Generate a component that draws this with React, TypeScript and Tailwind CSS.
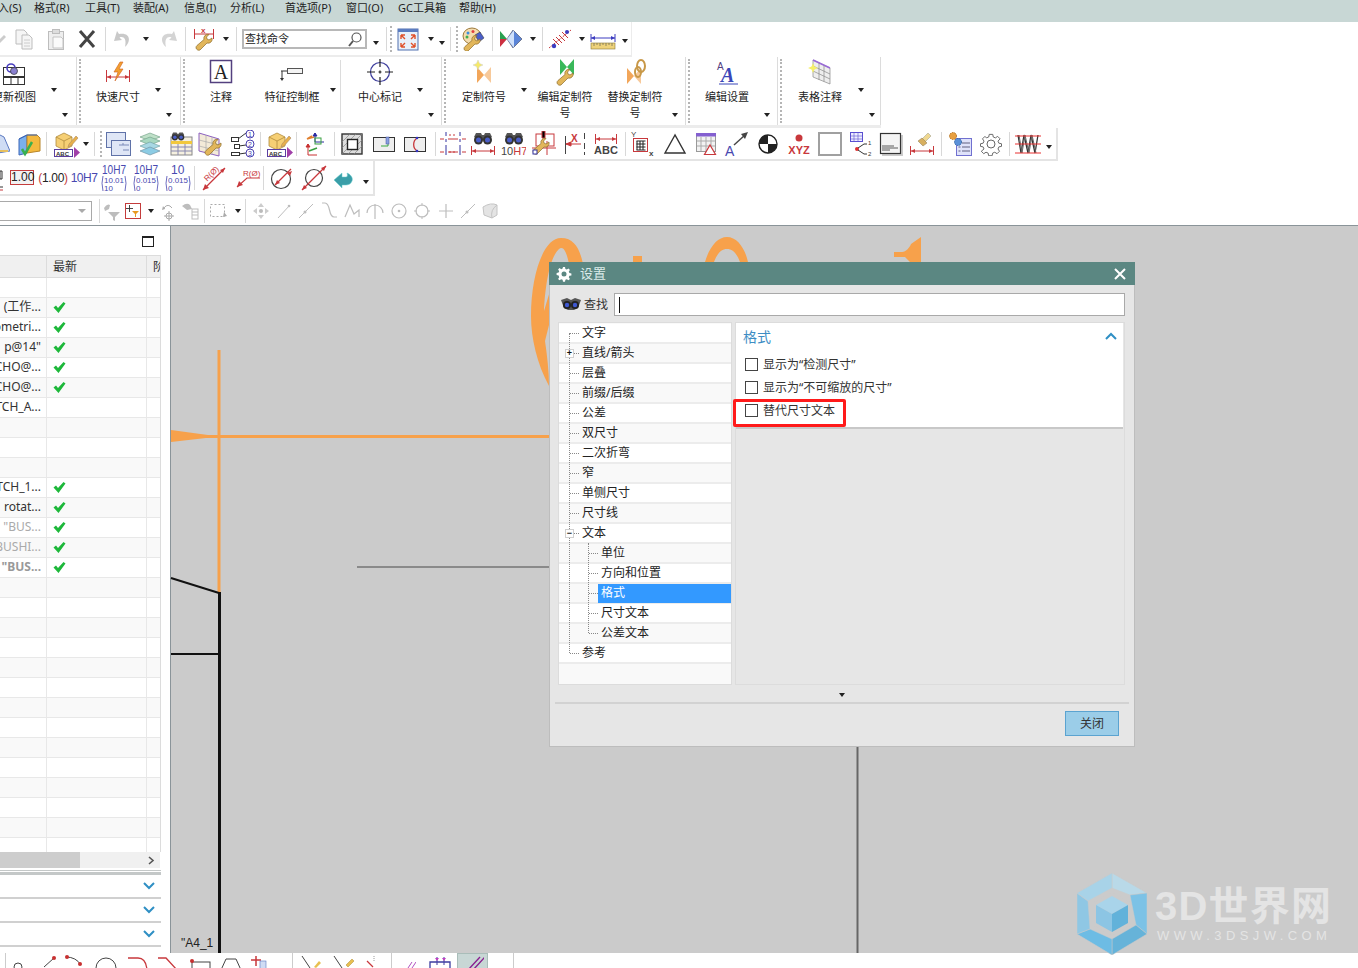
import React from "react";

const S = ({ w = 24, h = 24, children }: { w?: number; h?: number; children?: React.ReactNode }) => (
  <svg width={w} height={h} viewBox={`0 0 ${w} ${h}`} className="block shrink-0">{children}</svg>
);
const C = ({ c, children }: { c: string; children?: React.ReactNode }) => (
  <div className={`${c} h-full flex items-center justify-center shrink-0 overflow-hidden`}>{children}</div>
);
const Sep = ({ c }: { c: string }) => (
  <div className={`${c} h-full flex items-center justify-center shrink-0`}><div className="w-px h-[24px] bg-[#d8d8d8]" /></div>
);
const Grip = ({ c = "h-[26px]" }: { c?: string }) => <div className={`${c} ml-[2px] w-0 border-l-2 border-dotted border-[#b5b5b5] shrink-0`} />;
const Caret = () => <span className="block w-0 h-0 border-l-[3.5px] border-r-[3.5px] border-t-[4px] border-l-transparent border-r-transparent border-t-[#222]" />;

const R = "#c8383c", B = "#4848b0", T = "#e2b65a", O = "#f2a65a", D = "#444";
const Fs = { fontFamily: "'Liberation Sans',sans-serif" };

const Wrench = ({ x = 0, y = 0 }: { x?: number; y?: number }) => (
  <path transform={`translate(${x} ${y})`} d="M1 15a3 3 0 0 0 4 2l7-7a4 4 0 0 0 5-5l-3 2-2-1-.5-2 2.5-2.500a4 4 0 0 0-5 5l-7 6a3 3 0 0 0-1 2.500z" fill={T} stroke="#8c6d2c" strokeWidth=".7" />
);
const Binoc = ({ x = 0, y = 0 }: { x?: number; y?: number }) => (
  <g transform={`translate(${x} ${y})`}>
    <path d="M1 6l2-4h5l1 2h2l1-2h5l2 4-4 3H5z" fill="#555" />
    <circle cx="5.500" cy="9" r="4.500" fill="#333" /><circle cx="14.500" cy="9" r="4.500" fill="#333" />
    <circle cx="5.500" cy="9" r="2.500" fill="#4a5ec8" /><circle cx="14.500" cy="9" r="2.500" fill="#4a5ec8" />
  </g>
);
const BoxABC = () => (
  <S w={30} h={30}>
    <path d="M6 8l8-4 8 4v9l-8 4-8-4z" fill="#f6cf74" stroke="#b08a3c" strokeWidth=".8" />
    <path d="M6 8l8 4 8-4M14 12v9" stroke="#b08a3c" strokeWidth=".8" fill="none" />
    <path d="M19 15l7-8 2 2-7 8-3 1z" fill="#e8b04a" stroke="#a86" strokeWidth=".6" />
    <rect x="4.500" y="20.500" width="18" height="7" fill="#fff" stroke="#5b3fa0" />
    <text x="6" y="26.500" fontSize="6" fontWeight="700" fill="#333" style={Fs}>ABC</text>
    <path d="M24 18l6 5.500-6 5.500z" fill="#a03fa8" />
  </S>
);
const Bow = ({ c1 = O, c2 = "#f7c99a" }: { c1?: string; c2?: string }) => (
  <g><path d="M6 9l7 8-7 8z" fill={c1} /><path d="M20 9l-7 8 7 8z" fill={c2} /></g>
);

/* ---------- row 1 ---------- */
const Copy = () => <S><path d="M3 3h8l3 3v11H3z" fill="#f5f5f5" stroke="#bdbdbd" /><path d="M9 8h7l3 3v11H9z" fill="#f5f5f5" stroke="#bdbdbd" /><path d="M11 13h6M11 16h6M11 19h6" stroke="#ccc" /></S>;
const Paste = () => <S><rect x="4.500" y="4.500" width="15" height="18" fill="#eee" stroke="#bdbdbd" /><rect x="8.500" y="2.500" width="7" height="4" fill="#ddd" stroke="#bdbdbd" /><path d="M9 10h8l2 2v9H9z" fill="#fafafa" stroke="#c4c4c4" /></S>;
const Xx = () => <S><path d="M5 4l14 16M19 4L5 20" stroke={D} strokeWidth="3" /></S>;
const Undo = () => <S><path d="M6 4L3 14l8-1-2.500-2.500C12 9 16 11 14 20c6-5 6-15-6-13z" fill="#c9c9c9" /></S>;
const Redo = () => <S><g transform="matrix(-1 0 0 1 24 0)"><path d="M6 4L3 14l8-1-2.500-2.500C12 9 16 11 14 20c6-5 6-15-6-13z" fill="#d4d4d4" /></g></S>;
const WrenchDim = () => (
  <S><path d="M2.500 2v10M21.500 2v10M2 7h20" stroke={R} /><text x="9" y="6" fontSize="8" fontWeight="700" fill={R} style={Fs}>x</text><Wrench x={3} y={6} /></S>
);
const Fit = () => (
  <S><rect x="2" y="2" width="20" height="21" fill="#e8f0fa" stroke="#5070b0" /><rect x="2" y="2" width="20" height="3" fill="#5b7cc0" /><path d="M5 8h4M5 8v4M19 8h-4M19 8v4M5 20h4M5 20v-4M19 20h-4M19 20v-4M5 8l4 4M19 8l-4 4M5 20l4-4M19 20l-4-4" stroke="#e0502a" strokeWidth="1.400" fill="none" /></S>
);
const Palette = () => (
  <S><ellipse cx="11" cy="9" rx="9" ry="8" fill="#f4dcae" stroke="#9c7a3c" /><circle cx="7" cy="6" r="1.500" fill="#3a8ee0" /><circle cx="12" cy="4.500" r="1.500" fill="#e04040" /><circle cx="6" cy="10" r="1.500" fill="#3fae50" /><path d="M14 8l5-3 4 6-5 4z" fill="#4a5ec8" stroke="#333" strokeWidth=".5" /><Wrench x={2} y={7} /></S>
);
const PlayDia = () => <S><path d="M1 4l7 8H1z" fill="#2aa050" /><path d="M1 12h7l-7 8z" fill="#cc3040" /><path d="M14 3l9 9-9 9-6-9z" fill="#5a84d8" stroke="#445" strokeWidth=".6" /><path d="M15 3l-7 9 7 9z" fill="#cfe0fa" /></S>;
const RedDash = () => <S w={26} h={26}><path d="M2 22L24 4" stroke={R} strokeDasharray="2 1" /><path d="M9 11l6 6M12 9l6 6M15 6l6 6M6 13l6 6" stroke={R} /><circle cx="7" cy="20" r="2.200" fill="#3c3cc0" /><circle cx="20" cy="6" r="2" fill="#3c3cc0" /></S>;
const Ruler = () => <S w={26} h={24}><path d="M1 7v8M25 7v8M1 11h24" stroke="#3c3cc0" /><path d="M1 11l4-2v4zM25 11l-4-2v4z" fill="#3c3cc0" /><rect x="1" y="16" width="24" height="6" fill="#eed27a" stroke="#8a7a3a" strokeWidth=".6" /><path d="M4 16v3M7 16v2M10 16v3M13 16v2M16 16v3M19 16v2M22 16v3" stroke="#665" strokeWidth=".7" /></S>;

/* ---------- ribbon ---------- */
const ViewIc = () => <S w={26} h={28}><rect x="2.500" y="9.500" width="21" height="9" fill="#fff" stroke="#333" /><rect x="2.500" y="19.500" width="21" height="7" fill="#fff" stroke="#333" /><path d="M10 20v6M17 20v6" stroke="#333" /><circle cx="10" cy="10" r="4" fill="none" stroke="#4a3fc0" strokeWidth="1.600" /><circle cx="13" cy="13" r="3.500" fill="#8a80d0" stroke="#333" strokeWidth=".7" /></S>;
const Quick = () => <S w={26} h={28}><path d="M1.500 12v12M24.500 12v12M2 19h22" stroke={R} /><path d="M2 19l4-2v4zM24 19l-4-2v4z" fill={R} /><path d="M15 4l-6 10h4l-3 9 8-12h-4l4-7z" fill="#f2a030" stroke="#d06020" strokeWidth=".6" /></S>;
const AIc = () => <S w={24} h={26}><rect x="1.500" y="1.500" width="21" height="22" fill="#fff" stroke="#53407f" strokeWidth="1.500" /><text x="12" y="20" textAnchor="middle" fontSize="20" fill="#222" style={{ fontFamily: "'Liberation Serif',serif" }}>A</text></S>;
const Fcf = () => <S w={26} h={26}><rect x="8.500" y="9.500" width="15" height="5" fill="#f4f4f4" stroke="#555" /><path d="M2 12h6M3 12v8" stroke="#333" fill="none" /><path d="M1 19h4l-2 3z" fill="#333" /></S>;
const Center = () => <S w={26} h={28}><circle cx="13" cy="14" r="9.500" fill="none" stroke="#3c3c9c" strokeWidth="1.200" /><path d="M13 1v8M13 19v8M0 14h8M18 14h8M11.500 14h3M13 12.500v3" stroke="#222" strokeWidth="1.200" /></S>;
const Sym1 = () => <S w={26} h={28}><Bow /><path d="M7 2l1.500 3.500L12 7 8.500 8.500 7 12 5.500 8.500 2 7l3.500-1.500z" fill="#f5e96a" stroke="#ccc" strokeWidth=".5" /></S>;
const Sym2 = () => <S w={26} h={28}><path d="M8 1l7 8-7 8zM22 1l-7 8 7 8z" fill="#39b85a" /><Wrench x={4} y={10} /></S>;
const Sym3 = () => <S w={26} h={28}><g transform="translate(-1 1)"><Bow /></g><ellipse cx="19" cy="8" rx="4" ry="6" fill="none" stroke="#c89848" strokeWidth="2" /><ellipse cx="16" cy="14" rx="3" ry="5" fill="none" stroke="#c89848" strokeWidth="2" /></S>;
const Aa = () => <S w={24} h={28}><text x="2" y="12" fontSize="10" fill="#53407f" style={Fs}>A</text><text x="6" y="24" fontSize="20" fontWeight="700" fontStyle="italic" fill="#3a46b8" style={{ fontFamily: "'Liberation Serif',serif" }}>A</text><path d="M4 26h19" stroke="#3a46b8" /></S>;
const TableIc = () => <S w={26} h={28}><path d="M6 2l17 8v16L6 19z" fill="#eee" stroke="#888" strokeWidth=".7" /><path d="M6 2l17 8" stroke="#9a6ad8" strokeWidth="1.500" /><path d="M12 5v17M17 7.500v16M6 8l17 8M6 13l17 8" stroke="#888" strokeWidth=".7" /><path d="M6 5l1.500 3.500L11 10 7.500 11.500 6 15 4.500 11.500 1 10l3.500-1.500z" fill="#f5ef6a" /></S>;

/* ---------- row 3 ---------- */
const BoxCheck = () => <S w={26} h={26}><path d="M3 8l8-4 0 18-8 2z" fill="#7ab0ee" stroke="#3c66b8" /><path d="M11 4h10l3 3v13l-13 2z" fill="#f4b93e" stroke="#b8862a" /><path d="M3 8l8-4h10" stroke="#3c66b8" fill="none" /><path d="M6 18l3 5 7-12" stroke="#38b050" strokeWidth="2.500" fill="none" /></S>;
const Frag = () => <S w={10} h={26}><path d="M-4 2l8 4 6 14-12 2z" fill="#cfdcf4" stroke="#5a78c0" /><path d="M-2 20h10" stroke="#e6c060" strokeWidth="2" /></S>;
const Sheets = () => <S w={26} h={26}><rect x="1.500" y="1.500" width="19" height="15" fill="#dfe6f6" stroke="#5f72a8" /><rect x="6.500" y="9.500" width="19" height="15" fill="#dfe6f6" stroke="#5f72a8" /><path d="M14 14h10M18 14v-2M18 19h6" stroke="#7a8ab8" /></S>;
const Layers = () => <S w={26} h={26}><path d="M13 2l10 4-10 4-10-4z" fill="#bfe0c8" stroke="#6a9a80" strokeWidth=".6" /><path d="M3 10l10-4 10 4-10 4z" fill="#a8d8c0" stroke="#6a9a80" strokeWidth=".6" /><path d="M3 15l10-4 10 4-10 4z" fill="#a8d8e4" stroke="#6a9a9a" strokeWidth=".6" /><path d="M3 20l10-4 10 4-10 4z" fill="#8ccce4" stroke="#6a8a9a" strokeWidth=".6" /></S>;
const BinTable = () => <S w={26} h={26}><rect x="3" y="6" width="21" height="18" fill="#f5f0e0" stroke="#888" /><rect x="3" y="10" width="21" height="3" fill="#f2c83c" /><path d="M3 16h21M3 20h21M10 13v11M17 13v11" stroke="#8888b0" /><g transform="translate(3 0) scale(.7)"><Binoc /></g></S>;
const WrenchTab = () => <S w={26} h={26}><path d="M2 2l20 6v17L2 20z" fill="#f3ead8" stroke="#8c60c0" /><path d="M9 4v18M15 6v18M2 9l20 5M2 15l20 5" stroke="#aaa" strokeWidth=".7" /><Wrench x={7} y={7} /></S>;
const NumList = () => (
  <S w={26} h={28}><rect x="2.500" y="7.500" width="7" height="4" fill="#fff" stroke="#333" /><rect x="5.500" y="14.500" width="5" height="4" fill="#fff" stroke="#333" /><rect x="2.500" y="22.500" width="8" height="3" fill="#fff" stroke="#333" /><path d="M9 9l8-6M10 16l7-1M10 24l7-1" stroke="#333" />
    {([["1", 4], ["2", 14], ["3", 23]] as [string, number][]).map(([t, y]) => <g key={t}><circle cx="21" cy={y} r="4" fill="#fff" stroke="#4a3fb0" /><text x="21" y={y + 3} textAnchor="middle" fontSize="7" fill="#4a3fb0" style={Fs}>{t}</text></g>)}
  </S>
);
const Coords = () => <S w={26} h={28}><path d="M12 3v9M12 12h9M12 3l-2 3h4z" stroke="#2a2aa0" fill="#2a2aa0" /><rect x="12" y="8" width="6" height="6" fill="none" stroke="#38a040" /><path d="M11 7L4 9M4 9l5-3" stroke="#e08030" strokeWidth="1.500" /><path d="M5 14v11M5 25h9M5 14l-2 3h4z" stroke="#c83030" fill="#c83030" /><path d="M6 21l8-3" stroke="#38a040" strokeWidth="1.500" /></S>;
const Hatch = () => (
  <S w={24} h={24}><rect x="2" y="2" width="20" height="20" fill="#ddd" stroke="#333" strokeWidth="1.400" /><path d="M2 10l8-8M2 16L16 2M2 22L22 2M8 22L22 8M14 22l8-8" stroke="#888" strokeWidth=".7" /><rect x="7.500" y="7.500" width="10" height="10" fill="#fff" stroke="#222" strokeWidth="1.400" /></S>
);
const Rect1 = () => <S w={24} h={24}><rect x="1.500" y="5.500" width="21" height="14" fill="#eee" stroke="#333" /><path d="M9 14h7V6" stroke="#38a840" fill="none" /><rect x="14" y="5" width="3" height="7" fill="#8aa0e0" stroke="#4050a0" strokeWidth=".5" /></S>;
const Rect2 = () => <S w={24} h={24}><rect x="1.500" y="5.500" width="21" height="14" fill="#eee" stroke="#333" /><path d="M14 6a8 8 0 0 0 0 13" stroke={R} strokeWidth="1.300" fill="none" /><circle cx="14" cy="6" r="1.300" fill="#3333c0" /><circle cx="14" cy="19" r="1.300" fill="#3333c0" /></S>;
const DashGrid = () => <S w={26} h={26}>{[5, 18].map((y) => <path key={y} d={`M0 ${y + 3}h4M8 ${y + 3}h10M22 ${y + 3}h4`} stroke={R} />)}<path d="M6 1v4M20 1v4M6 14v10M20 14v10M6 8v3M20 8v3" stroke="#3333a0" /><path d="M9 4h8M9 21h8" stroke={R} strokeDasharray="2 2" /></S>;
const BinDim = () => <S w={26} h={26}><Binoc x={3} /><path d="M1.500 15v9M24.500 15v9M2 20h22" stroke={R} /><path d="M2 20l4-2v4zM24 20l-4-2v4z" fill={R} /></S>;
const BinH7 = () => <S w={26} h={26}><Binoc x={4} /><text x="1" y="24" fontSize="11" style={Fs} fill={D}>10<tspan fill={R}>H7</tspan></text></S>;
const WrenchRed = () => <S w={26} h={26}><rect x="4" y="3" width="18" height="12" fill="none" stroke={R} /><path d="M10 0h3v7h-3zM0 17h24M15 10v14" stroke={R} /><Wrench x={0} y={6} /><rect x="1" y="19" width="4" height="4" fill="#fff" stroke="#3333a0" /></S>;
const DimX = () => <S w={24} h={26}><path d="M2.500 5v18M21.500 2v6M21.500 12v6M21.500 21v3" stroke={D} /><path d="M3 13h15M3 13l5-2v4z" stroke={R} fill={R} /><text x="8" y="11" fontSize="10" fontWeight="700" fill={R} style={Fs}>X</text></S>;
const DimABC = () => <S w={26} h={26}><path d="M2.500 3v10M23.500 3v10M3 8h20" stroke={R} /><path d="M3 8l4-2v4zM23 8l-4-2v4z" fill={R} /><text x="13" y="23" textAnchor="middle" fontSize="11" fontWeight="700" fill={D} style={Fs}>ABC</text></S>;
const GridXY = () => <S w={26} h={28}><text x="1" y="7" fontSize="8" fill={D} style={Fs}>Y</text><rect x="3.500" y="8.500" width="14" height="13" fill="#fff" stroke={R} /><path d="M6.500 11h9M6.500 14h9M6.500 17h9M6.500 20h9M7 11v9M10 11v9M13 11v9" stroke="#222" /><text x="19" y="26" fontSize="8" fontWeight="700" fill={D} style={Fs}>x</text></S>;
const Tri = () => <S w={24} h={24}><path d="M12 3L2 21h20z" fill="none" stroke="#333" strokeWidth="1.400" /></S>;
const TableTri = () => <S w={24} h={26}><rect x="2.500" y="3.500" width="19" height="17" fill="#f2f2f2" stroke="#999" /><rect x="2" y="2" width="20" height="3.500" fill="#8460d0" /><path d="M7 6v14M12 6v14M17 6v14M3 10h18M3 15h18" stroke="#aaa" /><path d="M16 14l5.500 9.500h-11z" fill="#fff" stroke={R} strokeWidth="1.200" /></S>;
const AArrow = () => <S w={26} h={26}><text x="1" y="25" fontSize="14" fill={B} style={Fs}>A</text><path d="M10 14L21 4" stroke={D} strokeWidth="1.400" /><path d="M24 1l-7 2 4 5z" fill={D} /></S>;
const Datum = () => <S w={24} h={24}><circle cx="12" cy="12" r="9" fill="#fff" stroke="#222" strokeWidth="1.400" /><path d="M12 12V3a9 9 0 0 0-9 9zM12 12v9a9 9 0 0 0 9-9z" fill="#222" /></S>;
const Xyz = () => <S w={26} h={26}><circle cx="13" cy="7" r="3.500" fill={R} /><text x="13" y="23" textAnchor="middle" fontSize="11" fontWeight="700" fill={R} style={Fs}>XYZ</text></S>;
const WhiteSq = () => <div className="w-[24px] h-[24px] bg-white border-2 border-[#a0a0a0]" />;
const TabTree = () => <S w={26} h={26}><rect x="2.500" y="1.500" width="12" height="9" fill="#eef" stroke="#5a50d0" /><path d="M6 2v8M10 2v8M3 5h11M3 8h11" stroke="#5a50d0" strokeWidth=".6" /><circle cx="9" cy="18" r="2" fill="#e03030" /><path d="M10 17l6-4h3M10 19l6 4h3" stroke="#333" fill="none" /><text x="20" y="14" fontSize="6" fill="#333" style={Fs}>1</text><text x="20" y="25" fontSize="6" fill="#333" style={Fs}>2</text></S>;
const SheetIc = () => <S w={24} h={26}><rect x="3" y="4" width="21" height="21" fill="#ccc" /><rect x="1.500" y="2.500" width="20" height="20" fill="#f4f4f4" stroke="#333" strokeWidth="1.200" /><path d="M3 15h12M3 17h16M3 19h8" stroke="#333" strokeWidth=".8" /></S>;
const Brush = () => <S w={26} h={26}><path d="M19 2l3 3-6 6-3-3z" fill="#f0d890" stroke="#998" strokeWidth=".5" /><path d="M13 7l5 5-4 3-5-5z" fill="#d8b060" stroke="#875" strokeWidth=".5" /><path d="M1.500 15v9M24.500 15v9M2 20h22" stroke={R} /><path d="M2 20l4-2v4zM24 20l-4-2v4z" fill={R} /></S>;
const GearList = () => <S w={26} h={26}><rect x="9.500" y="7.500" width="15" height="17" fill="#dfe2fa" stroke="#7070d0" /><path d="M15 12h8M15 16h8M15 20h8M11.500 12h2M11.500 16h2M11.500 20h2" stroke="#606080" /><circle cx="6" cy="5" r="3.500" fill="#e8a040" stroke="#b07020" strokeDasharray="1.500 1" /><circle cx="11" cy="11" r="3.500" fill="#5a90d8" stroke="#3060a0" strokeDasharray="1.500 1" /></S>;
const Gear = () => <S w={24} h={24}><path d="M10 1h4l.6 3 2.400 1 2.600-1.700 2.800 2.800L20 8.700l1 2.400 3 .6v3l-3 .6-1 2.400 1.700 2.600-2.800 2.800-2.600-1.700-2.400 1-.6 3h-4l-.6-3-2.400-1-2.600 1.700-2.800-2.800L4 17.700l-1-2.400-3-.6v-3l3-.6 1-2.400-1.700-2.600 2.800-2.800L6.700 5l2.700-1z" transform="translate(1.500 1.500) scale(.875)" fill="#fff" stroke="#666" strokeWidth="1.100" /><circle cx="12" cy="12" r="4" fill="#fff" stroke="#666" /></S>;
const Spring = () => <S w={26} h={26}><path d="M3 4l3 18 3-18 4 18 3-18 4 18 3-18" fill="none" stroke="#333" strokeWidth="1.300" /><path d="M4 4l3 18 3-18 4 18 3-18 4 18" fill="none" stroke="#666" /><path d="M0 5h26M0 13h26M0 22h26" stroke="#e83030" /></S>;

/* ---------- row 4 ---------- */
const Stack = ({ a, b, c, tl }: { a: string; b: string; c: string; tl?: boolean }) => (
  <S w={26} h={30}>
    {tl ? <text x="1" y="11" fontSize="12" fill={B} textLength="24" lengthAdjust="spacingAndGlyphs" style={Fs}>{a}</text> : <text x="6" y="11" fontSize="12" fill={B} style={Fs}>{a}</text>}
    <path d="M2 13q-2 7 0 15M24 13q2 7 0 15" fill="none" stroke={B} strokeWidth=".8" />
    <text x="3" y="20" fontSize="8" fill={B} textLength="20" lengthAdjust="spacingAndGlyphs" style={Fs}>{b}</text>
    <text x="3" y="28" fontSize="8" fill={B} style={Fs}>{c}</text>
  </S>
);
const RO = () => <S w={26} h={26}><path d="M24 3L2 25" stroke={R} strokeWidth="1.300" /><path d="M2 25l2-6 4 4z" fill={R} /><path d="M24 3l-5 2 3 3z" fill={R} /><text x="5" y="14" fontSize="8" fill={R} transform="rotate(-45 9 14)" style={Fs}>R(Ø)</text></S>;
const RO2 = () => <S w={26} h={26}><path d="M2 22l10-9h13" stroke={R} strokeWidth="1.200" fill="none" /><path d="M2 22l2-6 4 4z" fill={R} /><text x="8" y="11" fontSize="8" fill={R} style={Fs}>R(Ø)</text></S>;
const Dia1 = () => <S w={24} h={26}><circle cx="11" cy="14" r="9.500" fill="#fff" stroke="#444" strokeWidth="1.200" /><path d="M5 20L21 4" stroke={R} strokeWidth="1.200" /><path d="M5 20l2-5 3 3zM17 8l5-2-2 5z" fill={R} /></S>;
const Dia2 = () => <S w={26} h={26}><circle cx="13" cy="13" r="8.500" fill="#fff" stroke="#444" strokeWidth="1.200" /><path d="M1 25L25 1" stroke={R} strokeWidth="1.200" /><path d="M1 25l2-5 3 3zM25 1l-5 2 3 3z" fill={R} /></S>;
const Back = () => <S w={20} h={22}><path d="M1 13l8-7v4h4c1 0 2-1 1-4 5 2 6 6 5 8-1 3-4 4-6 4H9v3z" fill="#3a9ea8" stroke="#6cc" strokeWidth=".5" /></S>;

/* ---------- row 5 (disabled greys) ---------- */
const g = "#bdbdbd";
const F1 = () => <S w={20} h={22}><path d="M2 8q3-5 6-3l-1 4-4 2zM6 12h12l-5 5v4l-2-1v-3z" fill={g} /></S>;
const RedFilter = () => <div className="w-[16px] h-[16px] border border-[#c43c3c] flex items-center justify-center"><S w={14} h={14}><path d="M3.500 1v7M0 4.500h7" stroke="#333" strokeWidth=".9" /><path d="M6 7h7l-3 3v3h-1v-3z" fill="#e89a20" /></S></div>;
const F3 = () => <S w={18} h={22}><path d="M5 9a4 4 0 0 1 6-3l2 2" stroke="#aaa" fill="none" /><path d="M4 6l2 3-3 1z" fill="#aaa" /><path d="M10 11v10M5 16h10" stroke="#aaa" /><circle cx="10" cy="16" r="3" fill="none" stroke="#aaa" /></S>;
const F4 = () => <S w={20} h={22}><path d="M2 6q5-4 8-1l2 4-5 1z" fill={g} /><rect x="12" y="9" width="6" height="10" fill="none" stroke={g} /><path d="M12 12h6M12 15h6" stroke={g} /></S>;
const DashBox = () => <S w={20} h={22}><rect x="2.500" y="4.500" width="14" height="12" fill="none" stroke="#aaa" strokeDasharray="2 2" /><path d="M16 12l3 4-4 1z" fill="#aaa" /></S>;
const Dots = () => <S w={20} h={22}><path d="M10 3l3 4h-6zM10 19l3-4h-6zM2 11l4-3v6zM18 11l-4-3v6z" fill="#ccc" /><circle cx="10" cy="11" r="2" fill="#bbb" /></S>;
const Ln = () => <S w={16} h={18}><path d="M2 16L14 3" stroke={g} /><circle cx="13" cy="4" r="1.300" fill={g} /></S>;
const Ln2 = () => <S w={18} h={18}><path d="M2 16L16 2" stroke={g} /><circle cx="8" cy="10" r="1.500" fill={g} /></S>;
const Sq = () => <S w={18} h={20}><path d="M2 2h3c6 0 3 14 9 14h3" stroke={g} fill="none" strokeWidth="1.200" /></S>;
const Zz = () => <S w={18} h={18}><path d="M2 15L7 3l4 9 5-4v7" stroke={g} fill="none" strokeWidth="1.200" /></S>;
const Arc = () => <S w={18} h={18}><path d="M1 11a8 8 0 0 1 16 0M9 2v15" stroke={g} fill="none" strokeWidth="1.200" /></S>;
const Cir = () => <S w={18} h={18}><circle cx="9" cy="9" r="7" fill="none" stroke={g} strokeWidth="1.200" /><circle cx="9" cy="9" r="1.300" fill={g} /></S>;
const Cir2 = () => <S w={18} h={18}><circle cx="9" cy="9" r="6" fill="none" stroke={g} strokeWidth="1.200" /><path d="M9 1v3M9 14v3M1 9h3M14 9h3" stroke={g} /></S>;
const Plus = () => <S w={14} h={14}><path d="M7 0v14M0 7h14" stroke={g} strokeWidth="1.200" /></S>;
const Blob = () => <S w={18} h={18}><path d="M2 5q8-5 14-2v10l-5 3-8-3z" fill="#e4e4e4" stroke="#c4c4c4" /><path d="M11 16q-2-8 5-13" stroke="#c4c4c4" fill="none" /></S>;

/* ---------- top ---------- */
const menu: [string, string][] = [
  ["入(S)", "w-[36px] -ml-[2px]"], ["格式(R)", "w-[51px]"], ["工具(T)", "w-[48px]"], ["装配(A)", "w-[51px]"], ["信息(I)", "w-[46px]"],
  ["分析(L)", "w-[55px]"], ["首选项(P)", "w-[61px]"], ["窗口(O)", "w-[52px]"], ["GC工具箱", "w-[61px]"], ["帮助(H)", "w-[50px]"],
];

const RItem = ({ w, label, ic }: { w: string; label: React.ReactNode; ic: React.ReactNode }) => (
  <div className={`${w} shrink-0 flex flex-col items-center text-[11px] leading-[16px] text-[#222] text-center`}>
    <div className="h-[30px] flex items-center justify-center">{ic}</div>
    <div className="mt-[2px] w-[58px]">{label}</div>
  </div>
);
const Pin = ({ c }: { c: string }) => <div className={`absolute ${c}`}><Caret /></div>;

const Ribbon = () => (
  <div className="w-[881px] h-[71px] border-b-[3px] border-[#ececec] flex overflow-hidden">
    <div className="relative w-[77px] border-r border-[#dcdcdc] shrink-0 overflow-hidden">
      <div className="-ml-[16px]"><RItem w="w-[60px]" label="更新视图" ic={<ViewIc />} /></div>
      <Pin c="left-[51px] top-[31px]" /><Pin c="left-[62px] top-[56px]" />
    </div>
    <div className="relative w-[104px] border-r border-[#dcdcdc] shrink-0 flex">
      <div className="w-[6px] py-[2px]"><Grip c="h-full" /></div>
      <RItem w="w-[70px]" label="快速尺寸" ic={<Quick />} />
      <Pin c="left-[78px] top-[31px]" /><Pin c="left-[89px] top-[56px]" />
    </div>
    <div className="relative w-[261px] border-r border-[#dcdcdc] shrink-0 flex">
      <div className="w-[6px] py-[2px]"><Grip c="h-full" /></div>
      <RItem w="w-[68px]" label="注释" ic={<AIc />} />
      <RItem w="w-[74px]" label="特征控制框" ic={<Fcf />} />
      <div className="w-[12px] border-r border-[#dcdcdc] my-[3px]" />
      <RItem w="w-[78px]" label="中心标记" ic={<Center />} />
      <Pin c="left-[149px] top-[31px]" /><Pin c="left-[236px] top-[31px]" /><Pin c="left-[247px] top-[56px]" />
    </div>
    <div className="relative w-[244px] border-r border-[#dcdcdc] shrink-0 flex">
      <div className="w-[6px] py-[2px]"><Grip c="h-full" /></div>
      <RItem w="w-[72px]" label="定制符号" ic={<Sym1 />} />
      <div className="w-[10px]" />
      <RItem w="w-[70px]" label="编辑定制符号" ic={<Sym2 />} />
      <RItem w="w-[70px]" label="替换定制符号" ic={<Sym3 />} />
      <Pin c="left-[79px] top-[31px]" /><Pin c="left-[230px] top-[56px]" />
    </div>
    <div className="relative w-[92px] border-r border-[#dcdcdc] shrink-0 flex">
      <div className="w-[6px] py-[2px]"><Grip c="h-full" /></div>
      <RItem w="w-[70px]" label="编辑设置" ic={<Aa />} />
      <Pin c="left-[78px] top-[56px]" />
    </div>
    <div className="relative w-[103px] border-r border-[#dcdcdc] shrink-0 flex">
      <div className="w-[6px] py-[2px]"><Grip c="h-full" /></div>
      <RItem w="w-[72px]" label="表格注释" ic={<TableIc />} />
      <Pin c="left-[80px] top-[31px]" /><Pin c="left-[91px] top-[56px]" />
    </div>
  </div>
);

const Top = () => (
  <div className="shrink-0">
    <div className="h-[22px] bg-[#c8d7d5] flex items-start text-[11px] leading-[15px] text-[#222] whitespace-nowrap overflow-hidden">
      {menu.map(([t, w]) => <div key={t} className={`${w} shrink-0`}>{t}</div>)}
    </div>
    <div className="w-[632px] h-[35px] border-b-2 border-r border-[#ececec] flex items-center pt-[1px]">
      <C c="w-[10px]"><S w={10} h={24}><path d="M-2 14l6-6 2 2-6 6z" fill="#ccc" /></S></C>
      <C c="w-[30px]"><Copy /></C><C c="w-[32px]"><Paste /></C><C c="w-[30px]"><Xx /></C>
      <Sep c="w-[7px]" />
      <C c="w-[28px]"><Undo /></C><C c="w-[18px]"><Caret /></C><C c="w-[26px]"><Redo /></C>
      <Sep c="w-[8px]" />
      <C c="w-[30px]"><WrenchDim /></C><C c="w-[14px]"><Caret /></C>
      <Sep c="w-[6px]" />
      <div className="ml-[3px] w-[125px] h-[20px] border-2 border-[#b8b8b8] bg-white shrink-0 flex items-center justify-between pl-[1px] pr-[2px] text-[11px] text-[#222]">
        <span>查找命令</span>
        <S w={16} h={16}><circle cx="9.500" cy="6.500" r="4.500" fill="#fff" stroke="#555" strokeWidth="1.200" /><path d="M6 10l-4 5" stroke="#555" strokeWidth="2" /></S>
      </div>
      <C c="w-[18px]"><div className="mt-[8px]"><Caret /></div></C>
      <Sep c="w-[3px]" />
      <Grip />
      <C c="w-[32px]"><Fit /></C><C c="w-[14px]"><Caret /></C><C c="w-[8px]"><div className="mt-[8px]"><Caret /></div></C>
      <Sep c="w-[8px]" />
      <Grip />
      <C c="w-[30px]"><Palette /></C>
      <Sep c="w-[8px]" />
      <C c="w-[30px]"><PlayDia /></C><C c="w-[14px]"><Caret /></C>
      <Sep c="w-[4px]" />
      <C c="w-[32px]"><RedDash /></C><C c="w-[12px]"><Caret /></C><C c="w-[30px]"><Ruler /></C><C c="w-[14px]"><div className="mt-[4px]"><Caret /></div></C>
    </div>
    <Ribbon />
    <div className="w-[1058px] h-[33px] border-b-2 border-r-2 border-[#e4e4e4] flex items-center">
      <C c="w-[14px]"><div className="-ml-[4px]"><Frag /></div></C>
      <C c="w-[30px]"><BoxCheck /></C><Sep c="w-[4px]" />
      <C c="w-[34px]"><BoxABC /></C><C c="w-[8px]"><Caret /></C><Sep c="w-[8px]" /><Grip />
      <C c="w-[32px]"><Sheets /></C><C c="w-[32px]"><Layers /></C><C c="w-[30px]"><BinTable /></C><C c="w-[28px]"><WrenchTab /></C><C c="w-[36px]"><NumList /></C>
      <Sep c="w-px" /><C c="w-[34px]"><BoxABC /></C><Sep c="w-[3px]" /><C c="w-[36px]"><Coords /></C><Sep c="w-px" />
      <C c="w-[34px]"><Hatch /></C><C c="w-[30px]"><Rect1 /></C><C c="w-[32px]"><Rect2 /></C><Sep c="w-[8px]" />
      <C c="w-[28px]"><DashGrid /></C><C c="w-[32px]"><BinDim /></C><C c="w-[28px]"><BinH7 /></C><C c="w-[36px]"><WrenchRed /></C><C c="w-[24px]"><DimX /></C><C c="w-[38px]"><DimABC /></C>
      <Sep c="w-px" /><C c="w-[34px]"><GridXY /></C><C c="w-[30px]"><Tri /></C><C c="w-[32px]"><TableTri /></C><C c="w-[30px]"><AArrow /></C><C c="w-[32px]"><Datum /></C><C c="w-[30px]"><Xyz /></C>
      <C c="w-[32px]"><WhiteSq /></C><C c="w-[30px]"><TabTree /></C><C c="w-[30px]"><SheetIc /></C><C c="w-[32px]"><Brush /></C><Sep c="w-[6px]" />
      <C c="w-[32px]"><GearList /></C><C c="w-[30px]"><Gear /></C><Sep c="w-[6px]" /><C c="w-[32px]"><Spring /></C><C c="w-[10px]"><div className="mt-[6px]"><Caret /></div></C>
    </div>
    <div className="w-[375px] h-[35px] border-b-2 border-r-2 border-[#e4e4e4] flex items-center">
      <div className="w-[8px] shrink-0"><S w={8} h={26}><path d="M0 6h2v8H0zM0 22h3" stroke="#333" fill="none" /><path d="M0 25h3" stroke={R} /></S></div>
      <C c="w-[28px]"><div className="w-[24px] h-[15px] border border-[#c43c3c] bg-[#f2f2f2] text-[12px] leading-[13px] text-center text-[#222] font-['Liberation_Sans',sans-serif]">1.00</div></C>
      <C c="w-[34px]"><span className="text-[12px] text-[#222] tracking-[-0.3px] font-['Liberation_Sans',sans-serif]"><span className="text-[#c43c3c]">(</span>1.00<span className="text-[#c43c3c]">)</span></span></C>
      <C c="w-[28px]"><span className="text-[12px] text-[#4848b0] tracking-[-0.5px] font-['Liberation_Sans',sans-serif]">10H7</span></C>
      <C c="w-[32px]"><Stack tl a="10H7" b="10.01" c="10" /></C><C c="w-[32px]"><Stack tl a="10H7" b="0.015" c="0" /></C>
      <C c="w-[32px]"><Stack a="10" b="0.015" c="0" /></C>
      <Sep c="w-px" /><C c="w-[38px]"><RO /></C><C c="w-[30px]"><RO2 /></C><Sep c="w-px" />
      <C c="w-[36px]"><Dia1 /></C><C c="w-[28px]"><Dia2 /></C><C c="w-[30px]"><Back /></C><C c="w-[16px]"><div className="mt-[8px]"><Caret /></div></C>
    </div>
    <div className="h-[29px] flex items-center">
      <div className="w-[92px] h-[20px] border border-l-0 border-[#a9a9a9] shrink-0 flex items-center justify-end pr-[5px]"><span className="block w-0 h-0 border-l-[4px] border-r-[4px] border-t-[4px] border-l-transparent border-r-transparent border-t-[#aaa]" /></div>
      <div className="w-[7px] shrink-0" /><Sep c="w-px" />
      <C c="w-[24px]"><F1 /></C><C c="w-[18px]"><RedFilter /></C><C c="w-[18px]"><Caret /></C><C c="w-[16px]"><F3 /></C><C c="w-[28px]"><F4 /></C><Sep c="w-px" />
      <C c="w-[26px]"><DashBox /></C><C c="w-[14px]"><Caret /></C><Sep c="w-px" /><div className="w-[2px] shrink-0" />
      <C c="w-[26px]"><Dots /></C><C c="w-[20px]"><Ln /></C><C c="w-[24px]"><Ln2 /></C><C c="w-[22px]"><Sq /></C><C c="w-[24px]"><Zz /></C><C c="w-[22px]"><Arc /></C><C c="w-[26px]"><Cir /></C><C c="w-[20px]"><Cir2 /></C><C c="w-[28px]"><Plus /></C><C c="w-[16px]"><Ln2 /></C><C c="w-[28px]"><Blob /></C>
    </div>
  </div>
);

/* ---------- left panel ---------- */
const Check = () => <S w={13} h={13}><path d="M.5 6.500L3 4.500 5 7l5.500-6 2 1.500L5.500 12z" fill="#1db83a" /></S>;
const rows: { t: string; ck?: boolean; c?: string }[] = [
  { t: "" }, { t: "(工作...", ck: true }, { t: "Geometri...", ck: true }, { t: 'p@14"', ck: true }, { t: "CHO@...", ck: true }, { t: "CHO@...", ck: true }, { t: "TCH_A..." },
  { t: "" }, { t: "" }, { t: "" }, { t: "TCH_1...", ck: true }, { t: "rotat...", ck: true }, { t: '"BUS...', ck: true, c: "text-[#aaa]" }, { t: '"BUSHI...', ck: true, c: "text-[#aaa]" }, { t: '"BUS...', ck: true, c: "text-[#999] font-bold" },
  ...Array.from({ length: 14 }, () => ({ t: "" })),
];
const Chev = ({ up }: { up?: boolean }) => <S w={12} h={8}><path d={up ? "M1 7l5-5 5 5" : "M1 1l5 5 5-5"} fill="none" stroke="#2f8fc4" strokeWidth="2" /></S>;

const Left = () => (
  <div className="w-[170px] shrink-0 bg-white flex flex-col">
    <div className="h-[29px] shrink-0 flex items-start justify-end pt-[10px] pr-[16px]"><div className="w-[12px] h-[11px] border border-[#222] border-t-2" /></div>
    <div className="w-[161px] h-[597px] shrink-0 border-r border-t border-[#dcdcdc] overflow-hidden flex flex-col">
      <div className="h-[22px] shrink-0 bg-[#f0f0f0] border-b border-[#dcdcdc] flex text-[12px] text-[#333]">
        <div className="w-[47px] border-r border-[#dcdcdc]" />
        <div className="w-[100px] border-r border-[#dcdcdc] pl-[6px] leading-[21px]">最新</div>
        <div className="w-[13px] overflow-hidden pl-[6px] leading-[21px] whitespace-nowrap">阶段</div>
      </div>
      {rows.map((r, i) => (
        <div key={i} className={`h-[20px] shrink-0 border-b border-[#e8e8e8] flex text-[12px] ${i % 2 ? "bg-[#f9f9f9]" : "bg-white"}`}>
          <div className={`w-[47px] border-r border-[#e8e8e8] overflow-hidden flex justify-end pr-[5px] whitespace-nowrap leading-[18px] ${r.c ?? "text-[#333]"}`}>{r.t}</div>
          <div className="w-[100px] border-r border-[#e8e8e8] pl-[6px] flex items-center">{r.ck && <Check />}</div>
        </div>
      ))}
    </div>
    <div className="w-[160px] h-[16px] bg-[#f0f0f0] flex shrink-0 items-center">
      <div className="w-[80px] h-full bg-[#cdcdcd]" />
      <div className="flex-1 flex justify-end pr-[5px]"><S w={7} h={9}><path d="M1 1l4 3.500-4 3.500" fill="none" stroke="#555" strokeWidth="1.600" /></S></div>
    </div>
    <div className="w-[161px] h-[5px] shrink-0 border-t border-b-[3px] border-[#c4c8c8] mt-[2px] bg-white" />
    {[0, 1, 2].map((i) => (
      <div key={i} className="w-[161px] h-[24px] shrink-0 border-b-2 border-[#d0d0d0] flex items-center justify-end pr-[6px]"><Chev /></div>
    ))}
  </div>
);

/* ---------- canvas ---------- */
const Drawing = () => (
  <svg className="absolute left-[170px] top-0" width="1188" height="727" viewBox="170 226 1188 727">
    <path d="M219 350v243M171 436.500h378" stroke="#f7a14b" strokeWidth="3" />
    <path d="M171 430l48 6.500-48 5.500z" fill="#f7a14b" />
    <path d="M549 386c-12-22-18-48-18-70 0-40 12-78 30-78 14 0 19 12 22 26h-14c-2-10-5-19-10-15-10 9-14 40-15 62l6-20v30l-5 20c2 14 4 30 4 45z" fill="#f7a14b" />
    <path d="M633 262v-6h9v6zM705 262c4-14 12-25 22-25 10 0 18 11 21 25h-8c-3-8-7-13-13-13-6 0-10 5-13 13z" fill="#f7a14b" />
    <path d="M894 252h8c4 0 8-5 9-8l10-7v25h-11l-5-5h-11z" fill="#f7a14b" />
    <path d="M171 578l48 15M171 654h48" stroke="#111" strokeWidth="2" />
    <path d="M219.500 592v361" stroke="#111" strokeWidth="3" />
    <path d="M357 567h192" stroke="#8a8a8a" strokeWidth="2" />
    <path d="M857.500 746v207" stroke="#666" strokeWidth="2" />
    <text x="181" y="947" fontSize="12" fill="#222" style={Fs}>"A4_1</text>
  </svg>
);

const Logo = () => {
  const o = [[36, 0], [71, 20], [71, 61], [36, 82], [1, 61], [1, 20]];
  const n = [[54, 22], [60, 52], [36, 66], [14, 56], [12, 28], [36, 15]];
  const cols = ["#b9d9e8", "#7cc2e6", "#66b3d9", "#6dbce4", "#8fc7e4", "#a8d3e8"];
  return (
    <S w={72} h={82}>
      {o.map((p, i) => {
        const q = o[(i + 1) % 6], a = n[i], b = n[(i + 5) % 6];
        return <path key={i} d={`M${p[0]} ${p[1]}L${q[0]} ${q[1]}L${a[0]} ${a[1]}L${b[0]} ${b[1]}z`} fill={cols[i]} stroke="#cbcbcb" strokeWidth=".5" />;
      })}
      <path d="M36 19l19 11v22L36 63 17 52V30z" fill="#cbcbcb" />
      <path d="M36 23l16 9-16 9-16-9z" fill="#a9d4ea" /><path d="M20 32l16 9v18l-16-9z" fill="#8cc5e4" /><path d="M52 32l-16 9v18l16-9z" fill="#62b2da" />
    </S>
  );
};

/* ---------- dialog ---------- */
const tree: { t: string; d: number; m?: string; sel?: boolean }[] = [
  { t: "文字", d: 0 }, { t: "直线/箭头", d: 0, m: "+" }, { t: "层叠", d: 0 }, { t: "前缀/后缀", d: 0 }, { t: "公差", d: 0 }, { t: "双尺寸", d: 0 }, { t: "二次折弯", d: 0 }, { t: "窄", d: 0 }, { t: "单侧尺寸", d: 0 }, { t: "尺寸线", d: 0 },
  { t: "文本", d: 0, m: "−" }, { t: "单位", d: 1 }, { t: "方向和位置", d: 1 }, { t: "格式", d: 1, sel: true }, { t: "尺寸文本", d: 1 }, { t: "公差文本", d: 1 }, { t: "参考", d: 0 },
];

const CheckRow = ({ t }: { t: string }) => (
  <div className="flex items-center gap-[5px] h-[23px] ml-[2px] text-[12px] text-[#333]"><span className="w-[13px] h-[13px] border border-[#444] bg-white shrink-0" />{t}</div>
);

const Dialog = () => (
  <div className="absolute left-[549px] top-[36px] w-[586px] h-[485px] bg-[#e6e6e6] border-r border-b border-l border-[#bdbdbd] flex flex-col">
    <div className="h-[23px] bg-[#5b8782] flex items-center shrink-0 -mx-px pl-[7px] pr-[9px]">
      <S w={16} h={16}><path d="M7 1h2l.4 2 1.400.6 1.700-1.100 1.400 1.400-1.100 1.700.6 1.400 2 .4v2l-2 .4-.6 1.400 1.100 1.700-1.400 1.400-1.700-1.100-1.400.6-.4 2H7l-.4-2-1.400-.6-1.700 1.100-1.400-1.400 1.100-1.700L2.600 9.400l-2-.4V7l2-.4.6-1.400-1.100-1.700 1.400-1.400 1.700 1.100 1.400-.6z" fill="#fff" /><circle cx="8" cy="8" r="2.500" fill="#5b8782" /></S>
      <span className="ml-[8px] text-[13px] text-[#dcecea]">设置</span>
      <span className="ml-auto"><S w={12} h={12}><path d="M1 1l10 10M11 1L1 11" stroke="#fff" strokeWidth="2" /></S></span>
    </div>
    <div className="h-[37px] flex items-center shrink-0 pl-[10px] pt-[2px] text-[12px] text-[#333]">
      <div className="w-[24px] shrink-0"><S w={22} h={20}><path d="M1 5l6-2 4 2 4-2 6 2-3 8-4 2H8l-4-2z" fill="#555" /><circle cx="7" cy="10" r="4" fill="#222" /><circle cx="15" cy="10" r="4" fill="#222" /><circle cx="7" cy="10" r="2.200" fill="#3f58d0" /><circle cx="15" cy="10" r="2.200" fill="#3f58d0" /></S></div>
      <span>查找</span>
      <div className="ml-[6px] w-[511px] h-[23px] bg-white border border-[#a9a9a9] flex items-center pl-[4px]"><span className="w-px h-[16px] bg-[#111]" /></div>
    </div>
    <div className="flex shrink-0 ml-[8px] gap-[3px]">
      <div className="relative w-[174px] h-[363px] bg-[#f9f9f9] border border-[#dcdcdc] pt-px">
        {tree.map((r, i) => (
          <div key={r.t + i} className={`h-[20px] border-b-2 border-[#ececec] text-[12px] text-[#222] leading-[18px] ${i % 2 ? "bg-[#f9f9f9]" : "bg-white"} ${r.d ? "pl-[42px]" : "pl-[23px]"}`}>
            <span className={r.sel ? "block bg-[#3399ff] text-white -ml-[3px] pl-[3px] h-[19px]" : ""}>{r.t}</span>
          </div>
        ))}
        <div className="absolute left-[10px] top-[10px] h-[320px] w-0 border-l border-dotted border-[#888]" />
        <div className="absolute left-[29px] top-[220px] h-[90px] w-0 border-l border-dotted border-[#888]" />
        {tree.map((r, i) => (
          <div key={"h" + i} className={`absolute w-[9px] border-t border-dotted border-[#888] ${r.d ? "left-[30px]" : "left-[11px]"}`} style={{ top: 10 + 20 * i }} />
        ))}
        {tree.filter((r) => r.m).map((r) => (
          <div key={"m" + r.t} className="absolute left-[6px] w-[9px] h-[9px] bg-white border border-[#d0d0d0] flex items-center justify-center text-[9px] leading-[7px] text-[#111] font-bold font-['Liberation_Sans',sans-serif]" style={{ top: 6 + 20 * tree.indexOf(r) }}>{r.m}</div>
        ))}
      </div>
      <div className="relative w-[390px] h-[363px] border border-[#dcdcdc]">
        <div className="w-[387px] h-[106px] bg-white border-b-2 border-[#c8c8c8] pl-[7px] pr-[6px] flex flex-col">
          <div className="h-[24px] mt-px shrink-0 flex items-center justify-between text-[14px] text-[#3d8dc4]"><span>格式</span><Chev up /></div>
          <div className="mt-[5px]"><CheckRow t="显示为“检测尺寸”" /><CheckRow t="显示为“不可缩放的尺寸”" /><CheckRow t="替代尺寸文本" /></div>
        </div>
        <div className="absolute -left-[3px] top-[76px] w-[113px] h-[28px] border-[3px] border-[#ff1a1a] rounded-[2px]" />
      </div>
    </div>
    <div className="h-[17px] flex items-center justify-center shrink-0"><div className="mt-[3px]"><Caret /></div></div>
    <div className="mx-[5px] h-[2px] bg-[#d2d2d2] shrink-0" />
    <div className="flex justify-end pr-[15px] pt-[7px]">
      <div className="w-[54px] h-[25px] bg-[#9bcde8] border border-[#5ba3d0] text-[12px] text-[#333] flex items-center justify-center">关闭</div>
    </div>
  </div>
);

const Bc = ({ w, mt, children }: { w: string; mt: string; children?: React.ReactNode }) => <div className={`${w} ${mt} shrink-0 flex justify-center`}>{children}</div>;
const Bsep = () => <div className="w-px h-[15px] bg-[#ccc] shrink-0" />;

const Bottom = () => (
  <div className="h-[15px] bg-white flex items-start overflow-hidden shrink-0">
    <div className="w-[5px] shrink-0" /><Bsep />
    <Bc w="w-[24px]" mt="mt-[7px]"><S w={14} h={14}><circle cx="7" cy="7" r="4" fill="none" stroke="#444" /></S></Bc>
    <div className="w-[8px] shrink-0" />
    <Bc w="w-[24px]" mt="mt-[2px]"><S w={16} h={14}><path d="M2 12L12 3" stroke="#444" /><circle cx="12" cy="3" r="2" fill="#c83030" /></S></Bc>
    <Bc w="w-[24px]" mt="mt-[2px]"><S w={20} h={14}><path d="M2 2q10 0 15 8" stroke="#444" fill="none" /><circle cx="3" cy="2" r="2" fill="#c83030" /><circle cx="16" cy="9" r="2" fill="#c83030" /></S></Bc>
    <Bc w="w-[40px]" mt="mt-[4px]"><S w={22} h={14}><circle cx="11" cy="11" r="10" fill="none" stroke="#444" /></S></Bc>
    <Bc w="w-[24px]" mt="mt-[4px]"><S w={22} h={14}><path d="M1 1h10q8 0 9 12" stroke={R} fill="none" strokeWidth="1.300" /></S></Bc>
    <Bc w="w-[36px]" mt="mt-[4px]"><S w={22} h={14}><path d="M1 1h8l11 12" stroke={R} fill="none" strokeWidth="1.300" /></S></Bc>
    <Bc w="w-[26px]" mt="mt-[5px]"><S w={24} h={14}><rect x="5" y="4" width="18" height="12" fill="none" stroke="#444" /><circle cx="5" cy="3" r="2" fill="#c83030" /></S></Bc>
    <Bc w="w-[38px]" mt="mt-[4px]"><S w={22} h={14}><path d="M1 13l5-11h10l5 11" stroke="#444" fill="none" /></S></Bc>
    <Bc w="w-[24px]" mt="mt-[2px]"><S w={24} h={14}><path d="M6 1v10M1 5h10" stroke={R} strokeWidth="1.500" /><rect x="10" y="6" width="6" height="8" fill="#cfdcf4" stroke="#5a78c0" strokeWidth=".6" /></S></Bc>
    <div className="w-[18px] shrink-0" /><Bsep />
    <Bc w="w-[36px]" mt="mt-[2px]"><S w={22} h={14}><path d="M2 1l8 12" stroke="#444" /><path d="M14 12l5-6 2 2-5 5z" fill="#e8c050" /></S></Bc>
    <Bc w="w-[28px]" mt="mt-[2px]"><S w={22} h={14}><path d="M2 1l8 12" stroke="#444" /><path d="M14 10l6-6 2 2-6 6z" fill="#e8c050" stroke="#a83" strokeWidth=".5" /></S></Bc>
    <Bc w="w-[30px]" mt="mt-[2px]"><S w={12} h={14}><path d="M8 1v5" stroke="#999" strokeDasharray="1 1" /><path d="M1 6l6 6" stroke={R} strokeWidth="1.300" /></S></Bc>
    <div className="w-[4px] shrink-0" /><Bsep />
    <Bc w="w-[34px]" mt="mt-[7px]"><S w={14} h={10}><path d="M6 8l4-6M10 8l4-6" stroke="#b050c0" /></S></Bc>
    <Bc w="w-[28px]" mt="mt-[3px]"><S w={22} h={14}><path d="M1 6h20v10H1z" fill="none" stroke="#3c3ca0" strokeWidth="1.300" /><path d="M8 1v8M15 1v8" stroke="#3c3ca0" /><path d="M6 2l4 0-2 3zM13 2l4 0-2 3z" fill="#c040c0" /></S></Bc>
    <div className="ml-[3px] w-[31px] h-[15px] shrink-0 bg-[#c8d7d5] border-t border-x border-[#a9bdb9] flex justify-center pt-[2px]"><S w={22} h={14}><path d="M6 14L18 1M11 14L23 1" stroke="#8a2090" strokeWidth="1.400" /></S></div>
    <div className="w-[25px] shrink-0" /><Bsep />
  </div>
);

export default function App() {
  return (
    <div className="w-[1358px] h-[968px] bg-white flex flex-col overflow-hidden text-[#222] font-['Noto_Sans','Noto_Sans_CJK_SC',sans-serif]">
      <Top />
      <div className="relative flex-1 min-h-0 flex border-t border-[#8a9499]">
        <Left />
        <div className="relative flex-1 bg-[#cbcbcb] border-l border-[#8a9499]" />
        <Drawing />
        <Dialog />
        <div className="absolute left-[1076px] top-[647px] flex items-start gap-[7px]">
          <Logo />
          <div className="flex flex-col mt-[12px] font-['Liberation_Sans','Noto_Sans_CJK_SC',sans-serif] text-[#e4e4e4]">
            <span className="text-[40px] leading-[42px] font-bold tracking-[1.200px] whitespace-nowrap">3D世界网</span>
            <span className="text-[13px] leading-[16px] tracking-[4.400px] mt-[1px] ml-[2px] whitespace-nowrap">WWW.3DSJW.COM</span>
          </div>
        </div>
      </div>
      <Bottom />
    </div>
  );
}
